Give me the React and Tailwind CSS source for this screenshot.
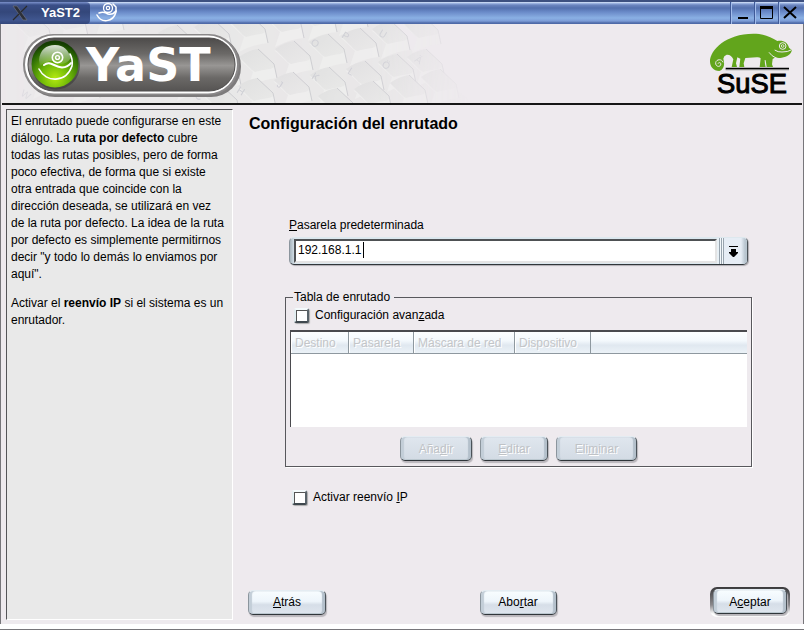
import React, { useState } from 'react';

// Bottom-right corner of every key cap in the header background
const KEY_CAPS = [
    [50, 43], [86, 36], [122, 30], [194, 54], [230, 48], [266, 43], [302, 38], [335, 32], [366, 27],
    [60, 90], [98, 98], [204, 92], [239, 85], [275, 78], [311, 70], [345, 63], [377, 57], [408, 50], [439, 44],
    [238, 114], [274, 107], [310, 101], [346, 96], [382, 90], [414, 83], [443, 78],
    [354, 117], [390, 110], [426, 104], [457, 98],
];

const KEY_LETTERS = [
    ['W', 18, 95], ['C', 192, 97], ['H', 234, 92], ['O', 308, 44], ['P', 339, 37], ['U', 376, 35],
    ['J', 274, 86], ['K', 309, 78], ['L', 345, 73], ['Ö', 379, 66], ['Ä', 412, 61],
];

const Keyboard = () => (
    <svg className="absolute left-0 top-0" width="470" height="79" viewBox="0 24 470 79" aria-hidden="true">
        <defs>
            <linearGradient id="keyTop" x1="0" y1="0" x2="1" y2="1">
                <stop offset="0" stopColor="#dfdfdf" />
                <stop offset="1" stopColor="#e8e8e7" />
            </linearGradient>
            <linearGradient id="fadeRamp" x1="0" y1="0" x2="1" y2="0">
                <stop offset="0" stopColor="#fff" stopOpacity="0.4" />
                <stop offset="0.45" stopColor="#fff" stopOpacity="0.95" />
                <stop offset="0.8" stopColor="#fff" stopOpacity="0.85" />
                <stop offset="1" stopColor="#fff" stopOpacity="0" />
            </linearGradient>
            <mask id="fade">
                <rect x="0" y="24" width="470" height="79" fill="url(#fadeRamp)" />
            </mask>
        </defs>
        <g mask="url(#fade)">
            <path d="M0 24H380L470 103H0Z" fill="#e8e7e7" />
            {KEY_CAPS.map(([x, y]) => (
                <g key={`${x}-${y}`} transform={`translate(${x} ${y})`}>
                    <path d="M-39 -20L-24 -6L-29 9Q-14 1 0 0L-3 -14L-8 -9Z" fill="#eeeeed" />
                    <path d="M-38 -21Q-28 -28 -19 -29L-4 -15Q0 -11 -7 -9Q-15 -8 -22 -6Q-25 -7 -28 -11Z" fill="url(#keyTop)" />
                    <path d="M-19 -29L-3 -14L0 0" fill="none" stroke="#cbcbcf" strokeWidth="1" />
                </g>
            ))}
            {KEY_LETTERS.map(([c, x, y]) => (
                <text
                    key={c}
                    x={x}
                    y={y}
                    transform={`rotate(32 ${x} ${y})`}
                    fontFamily="Liberation Sans, sans-serif"
                    fontSize="10"
                    fill="#cbccd2"
                >
                    {c}
                </text>
            ))}
        </g>
    </svg>
);

const YastLogo = () => (
    <svg className="relative" width="222" height="66" viewBox="21 32 222 66" role="img" aria-label="YaST">
        <defs>
            <linearGradient id="pill" x1="0" y1="0" x2="0" y2="1">
                <stop offset="0" stopColor="#4d4b4a" />
                <stop offset="0.3" stopColor="#6b6967" />
                <stop offset="0.52" stopColor="#989694" />
                <stop offset="0.75" stopColor="#6b6967" />
                <stop offset="1" stopColor="#565453" />
            </linearGradient>
            <radialGradient id="ball" cx="0.5" cy="0.8" r="0.75">
                <stop offset="0" stopColor="#b4ea10" />
                <stop offset="0.4" stopColor="#6fb808" />
                <stop offset="0.8" stopColor="#2c6a04" />
                <stop offset="1" stopColor="#143c02" />
            </radialGradient>
            <linearGradient id="gloss" x1="0" y1="0" x2="0" y2="1">
                <stop offset="0" stopColor="#fff" stopOpacity="0.85" />
                <stop offset="1" stopColor="#fff" stopOpacity="0.05" />
            </linearGradient>
        </defs>
        <rect x="25" y="36" width="216" height="61" rx="30" fill="#7d7b7c" />
        <rect x="23" y="34" width="216" height="61" rx="30" fill="#8a8889" />
        <rect x="25" y="35.5" width="212" height="58" rx="29" fill="#fff" />
        <rect x="28" y="38" width="207" height="53" rx="26" fill="url(#pill)" stroke="#4e4c4c" />
        <circle cx="56" cy="65.5" r="24" fill="#3b3b38" opacity="0.6" />
        <circle cx="55" cy="64" r="23.5" fill="url(#ball)" />
        <path d="M39 60C40 50 46 45 55 45S68 50 71 58Q64 68 53 61Q46 61 40 66Z" fill="url(#gloss)" />
        <g fill="none" stroke="#fff" strokeLinecap="round">
            <circle cx="57.5" cy="57.5" r="5.2" strokeWidth="1.6" />
            <circle cx="57.5" cy="57.5" r="1.9" strokeWidth="1.4" />
            <path d="M44 65C50 60 54 67 62 67.500Q68 67 71 63" strokeWidth="2" />
            <path d="M39 69C46 83 66 83 72 66Q73 59 70 54" strokeWidth="1.6" />
        </g>
        <text x="86" y="81" fontFamily="DejaVu Sans, sans-serif" fontWeight="700" fontSize="46" fill="#fff">YaST</text>
    </svg>
);

const SuseLogo = () => (
    <svg className="relative" width="86" height="68" viewBox="327 96 258 204" role="img" aria-label="SuSE">
        <path
            d="M358 213C340 213 330 200 330 184C330 150 378 101 460 101C494 101 512 112 532 123C550 120 563 127 567 143L575 150C576 161 562 171 545 173Q534 175 527 172L518 177L516 193L519 201H500L497 181L494 180L495 192L497 201H479L482 175Q478 171 470 172L436 174L431 190L433 201H418L421 176L412 172L408 190L411 201H395L400 178Q394 163 380 164Q371 167 370 176Q378 206 358 213Z"
            fill="#62a51c"
        />
        <path d="M369 187C366 176 349 177 347 188C346 199 358 203 362 195C365 188 356 185 354 191" fill="none" stroke="#eeeaee" strokeWidth="3" />
        <circle cx="548" cy="138" r="10" fill="none" stroke="#eeeaee" strokeWidth="3" />
        <circle cx="548" cy="138" r="4" fill="none" stroke="#eeeaee" strokeWidth="2.500" />
        <path d="M524 150Q534 157 546 156Q564 156 573 150M507 157Q514 168 530 175" fill="none" stroke="#eeeaee" strokeWidth="3" />
        <path d="M377 206H567" stroke="#000" strokeWidth="5" />
        <path d="M377 210H567" stroke="#a8a6a8" strokeWidth="2" />
        <text x="456" y="278" textAnchor="middle" fontFamily="Liberation Sans, sans-serif" fontSize="82" stroke="#000" strokeWidth="3">
            SuSE
        </text>
    </svg>
);

const TitleBar = () => (
    <header className="flex h-6 shrink-0 border-t-2 border-[#3d5080] bg-[linear-gradient(#e0eafa_0px,#a9c0ea_1px,#6c86c0_3px,#5470ae_6px,#6a8ac8_10px,#8ab0e4_16px,#7c9cd6_19px,#4e6aa8_21px)]">
        <div className="flex w-[90px] items-center rounded-r bg-[linear-gradient(#7c92cc_0px,#3a4f88_3px,#34477a_10px,#40568f_18px,#33467a_22px)] pl-3">
            <svg width="17" height="16" viewBox="0 0 17 16" aria-hidden="true">
                <path d="M1 1H5L15 15H11Z" fill="#2c2f38" stroke="#6a7080" strokeWidth="0.7" />
                <path d="M15 1L9 7M7 9L1 15" stroke="#2a2a2a" strokeWidth="1.200" />
            </svg>
            <h1 className="pl-3 font-bold text-[13px] text-white">YaST2</h1>
        </div>
        <svg className="ml-[6px]" width="22" height="21" viewBox="0 0 22 21" fill="none" stroke="#fff" strokeLinecap="round" aria-hidden="true">
            <circle cx="12" cy="6" r="4.500" strokeWidth="1.300" />
            <circle cx="12" cy="6" r="1.700" strokeWidth="1.200" />
            <path d="M3 11Q8 9 12 12Q17 13 20 9" strokeWidth="1.600" />
            <path d="M1 13C5 21 17 21 20 10V5L17 2" strokeWidth="1.500" />
        </svg>
        <div className="ml-auto flex">
            <button aria-label="Minimizar" className="flex w-6 items-center justify-center border-l border-[#3f5a98] shadow-[inset_1px_0_0_#a3bdec]">
                <svg width="14" height="14" viewBox="0 0 14 14"><path d="M2 12H12" stroke="#000" strokeWidth="2" /></svg>
            </button>
            <button aria-label="Maximizar" className="flex w-6 items-center justify-center border-l border-[#3f5a98] shadow-[inset_1px_0_0_#a3bdec]">
                <svg width="14" height="14" viewBox="0 0 14 14"><path d="M0.500 1V12.500H12.500V1" fill="none" stroke="#000" /><path d="M0 1.500H13" stroke="#000" strokeWidth="3" /></svg>
            </button>
            <button aria-label="Cerrar" className="flex w-[26px] items-center justify-center border-l border-[#3f5a98] pr-1 shadow-[inset_1px_0_0_#a3bdec]">
                <svg width="14" height="14" viewBox="0 0 14 14"><path d="M1 1L13 12M13 1L1 12" stroke="#000" strokeWidth="2" /></svg>
            </button>
        </div>
    </header>
);

const Button = ({ className, ...props }) => (
    <button
        className={`h-[25px] rounded-[5px] border border-t-[#e4ecf2] border-l-[#8b959d] border-r-[#4a5258] border-b-[#30363a] bg-[linear-gradient(#f8fdff,#eef5fb_45%,#d6dee8_60%,#dfe6ee)] shadow-[1px_2px_1px_#b9b6bb,inset_3px_0_1px_#c3ced8,inset_-3px_0_1px_#b4c0cb,inset_0_-1px_0_#bcc8d0] disabled:bg-[linear-gradient(#dfe6ee,#d3dbe4)] disabled:text-[#bfc2c6] disabled:[text-shadow:1px_1px_0_#fff] ${className}`}
        {...props}
    />
);

const Checkbox = ({ id, checked, onChange, children }) => (
    <div className="flex h-4 items-center gap-[6px]">
        <input
            id={id}
            type="checkbox"
            checked={checked}
            onChange={(e) => onChange(e.target.checked)}
            className="size-[15px] appearance-none rounded-[2px] border-2 border-t-[#f4fafc] border-l-[#e3edf0] border-r-[#59636a] border-b-[#3f484e] bg-white shadow-[inset_1px_1px_0_#555,1px_1px_1px_#aaa] checked:bg-[#555]"
        />
        <label htmlFor={id}>{children}</label>
    </div>
);

const HelpPanel = () => (
    <aside className="w-[227px] shrink-0 border border-t-[#555558] border-l-[#555558] border-r-white border-b-white bg-[#e9e9e9] pt-[3px] pr-[7px] pl-1 leading-[17px]">
        <p>
            El enrutado puede configurarse en este diálogo. La <b>ruta por defecto</b> cubre todas las rutas posibles,
            pero de forma poco efectiva, de forma que si existe otra entrada que coincide con la dirección deseada, se
            utilizará en vez de la ruta por defecto. La idea de la ruta por defecto es simplemente permitirnos decir "y
            todo lo demás lo enviamos por aquí".
        </p>
        <p className="mt-3">
            Activar el <b>reenvío IP</b> si el sistema es un enrutador.
        </p>
    </aside>
);

const App = () => {
    const [gateway, setGateway] = useState('192.168.1.1');
    const [advanced, setAdvanced] = useState(false);
    const [forwarding, setForwarding] = useState(false);

    const th = 'border-r border-[#8e989f] pl-1 text-left font-normal shadow-[inset_1px_0_0_#fff]';

    return (
        <div className="flex min-h-screen flex-col border-b border-[#77767a] bg-white font-['Liberation_Sans',Arial,sans-serif] text-[12px] leading-4 text-black">
            <TitleBar />

            <div className="mb-[5px] flex grow flex-col border-x border-[#77767a] bg-[#eeeaee] px-px">
                <div className="relative flex h-[81px] shrink-0 items-start justify-between border-b-2 border-[#161616] pt-2 pr-[7px] pl-[19px]">
                    <Keyboard />
                    <YastLogo />
                    <SuseLogo />
                </div>

                <div className="flex grow">
                    <div className="flex py-1 pl-1">
                        <HelpPanel />
                    </div>

                    <main className="flex grow flex-col pt-[9px] pr-3 pb-[7px] pl-[15px]">
                        <h2 className="pl-px text-[16px] leading-5 font-bold">Configuración del enrutado</h2>

                        <div className="mt-[83px] mr-[38px] ml-[37px]">
                            <div className="px-1">
                                <label htmlFor="gateway"><u>P</u>asarela predeterminada</label>
                                <div className="mt-1 flex h-7 rounded-[5px] border border-t-[#dde8ee] border-l-[#8b959d] border-r-[#4a5258] border-b-[#30363a] bg-[linear-gradient(90deg,#a8b5be,#dbe7ee_5px)] pl-1 shadow-[1px_1px_1px_#b0adb2]">
                                    <div className="relative my-px grow border-2 border-t-[#4e5154] border-l-[#4e5154] border-r-[#e4e4e4] border-b-[#e4e4e4] bg-white">
                                        <input
                                            id="gateway"
                                            value={gateway}
                                            onChange={(e) => setGateway(e.target.value)}
                                            className="block h-[18px] w-full pl-[2px] caret-transparent outline-none"
                                        />
                                        <span className="absolute top-px left-[67px] h-4 w-px bg-black" />
                                    </div>
                                    <button
                                        aria-label="Mostrar pasarelas"
                                        className="flex w-[30px] items-center justify-center rounded-r-[4px] bg-[linear-gradient(90deg,#e8f0f5_2px,#98a4ae_2px,#98a4ae_3px,#f3f8fb_3px,#f3f8fb_4px,#98a4ae_4px,#98a4ae_5px,#f3f8fb_5px,#f3f8fb_6px,#98a4ae_6px,#98a4ae_7px,#e6edf5_7px,#e6edf5_24px,#b9c6d0_28px)] pl-[2px]"
                                    >
                                        <svg width="9" height="11" viewBox="0 0 9 11"><path d="M0 0H9V1H0ZM2 3H7V6H9V7L5 11H4L0 7V6H2Z" /></svg>
                                    </button>
                                </div>
                            </div>

                            <fieldset className="mt-6 border border-[#58585c] px-1 pb-[5px] shadow-[1px_1px_0_#fff]">
                                <legend className="ml-[3px] pr-1 pl-px">Tabla de enrutado</legend>
                                <div className="mt-[2px] pl-1">
                                    <Checkbox id="advanced" checked={advanced} onChange={setAdvanced}>
                                        Configuración avan<u>z</u>ada
                                    </Checkbox>
                                </div>

                                <div className="mt-[7px] h-[97px] border-t-2 border-l border-[#4a4a4e] bg-white">
                                    <table className="w-full table-fixed border-separate border-spacing-0">
                                        <thead>
                                            <tr className="h-[22px] bg-[linear-gradient(#fcfeff,#f3f8fc_40%,#e0e8f0_60%,#edf3f8)] text-[#c3c5c8] [text-shadow:1px_1px_0_#fff] *:border-b">
                                                <th className={`w-[58px] ${th}`}>Destino</th>
                                                <th className={`w-[65px] ${th}`}>Pasarela</th>
                                                <th className={`w-[101px] ${th}`}>Máscara de red</th>
                                                <th className={`w-[76px] ${th}`}>Dispositivo</th>
                                                <td className="border-[#8e989f]" />
                                            </tr>
                                        </thead>
                                        <tbody />
                                    </table>
                                </div>

                                <div className="mt-[9px] flex justify-center gap-2">
                                    <Button disabled={!advanced} className="w-[72px]">Aña<u>d</u>ir</Button>
                                    <Button disabled={!advanced} className="w-[68px]"><u>E</u>ditar</Button>
                                    <Button disabled={!advanced} className="w-[81px]">Eli<u>m</u>inar</Button>
                                </div>
                            </fieldset>

                            <div className="mt-[22px] pl-[7px]">
                                <Checkbox id="forwarding" checked={forwarding} onChange={setForwarding}>
                                    Activar reenvío <u>I</u>P
                                </Checkbox>
                            </div>
                        </div>

                        <div className="mt-auto flex items-center justify-between">
                            <Button className="w-[78px]"><u>A</u>trás</Button>
                            <Button className="w-[77px]">Abo<u>r</u>tar</Button>
                            {/* default button gets the dark ring */}
                            <div className="flex rounded-[7px] bg-[linear-gradient(#3a3a3c,#8a888c_60%,#fff_90%)] p-[3px] pt-[2px]">
                                <Button className="w-[74px]">A<u>c</u>eptar</Button>
                            </div>
                        </div>
                    </main>
                </div>
            </div>
        </div>
    );
};

export default App;
